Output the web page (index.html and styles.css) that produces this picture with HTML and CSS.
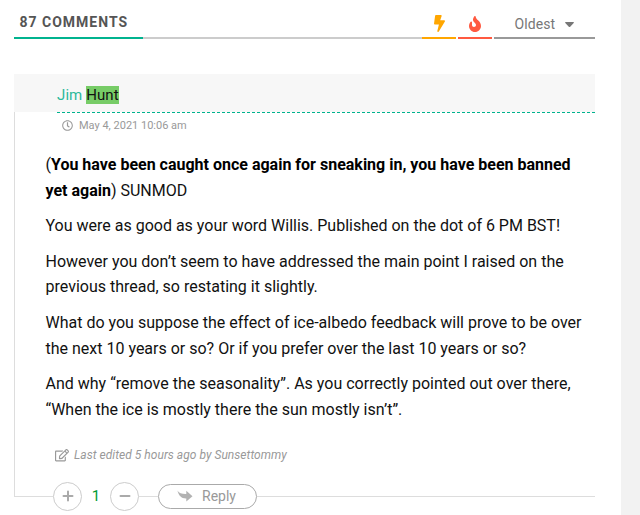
FILE: index.html
```html
<!DOCTYPE html>
<html lang="en">
<head>
  <meta charset="UTF-8" />
  <meta name="viewport" content="width=device-width, initial-scale=1.0"/>
  <title>Comments</title>
  <link rel="stylesheet" href="styles.css">
</head>
<body>
  <div class="page">
    <div class="thread-head">
      <div class="thread-count">87 COMMENTS</div>
      <div class="thread-line"></div>
      <div class="thread-filter bolt">
        <svg width="11" height="17" viewBox="0 0 320 512" preserveAspectRatio="none"><path d="M296 160H180.6l42.6-129.8C227.2 15 215.7 0 200 0H56C44 0 33.8 8.9 32.2 20.8l-32 240C-1.7 275.2 9.5 288 24 288h118.7L96.6 482.5c-3.6 15.2 8 29.5 23.3 29.5 8.4 0 16.4-4.4 20.8-12l176-304c9.3-15.9-2.2-36-20.7-36z"/></svg>
      </div>
      <div class="thread-filter fire">
        <svg width="12" height="16" viewBox="0 0 384 512"><path d="M216 23.86c0-23.8-30.65-32.77-44.15-13.04C48 191.85 224 200 224 288c0 35.63-29.11 64.46-64.85 63.99-35.17-.45-63.15-29.77-63.15-64.94v-85.51c0-21.7-26.47-32.23-41.43-16.5C27.8 213.16 0 261.33 0 320c0 105.87 86.13 192 192 192s192-86.13 192-192c0-170.29-168-193-168-296.14z"/></svg>
      </div>
      <div class="thread-sort">Oldest
        <svg width="9" height="5" viewBox="0 0 9 5"><path d="M.7 0h7.600q1 .2.4 1L5.200 4.700q-.7.600-1.400 0L.3 1q-.6-.8.400-1z"/></svg>
      </div>
    </div>

    <div class="comment">
      <div class="comment-head">
        <div class="comment-author">Jim <mark>Hunt</mark></div>
      </div>
      <div class="comment-body">
        <div class="comment-date">
          <svg width="11" height="11" viewBox="0 0 512 512"><path d="M256 8C119 8 8 119 8 256s111 248 248 248 248-111 248-248S393 8 256 8zm0 448c-110.500 0-200-89.500-200-200S145.500 56 256 56s200 89.500 200 200-89.500 200-200 200zm61.800-104.400l-84.900-61.700c-3.100-2.300-4.900-5.900-4.900-9.700V116c0-6.600 5.400-12 12-12h32c6.600 0 12 5.400 12 12v141.700l66.800 48.600c5.400 3.900 6.500 11.400 2.600 16.800L334.600 349c-3.900 5.300-11.400 6.500-16.800 2.600z"/></svg>
          <span>May 4, 2021 10:06 am</span>
        </div>
        <div class="comment-text">
          <p>(<strong>You have been caught once again for sneaking in, you have been banned<br>yet again</strong>) SUNMOD</p>
          <p>You were as good as your word Willis. Published on the dot of 6 PM BST!</p>
          <p>However you don’t seem to have addressed the main point I raised on the<br>previous thread, so restating it slightly.</p>
          <p>What do you suppose the effect of ice-albedo feedback will prove to be over<br>the next 10 years or so? Or if you prefer over the last 10 years or so?</p>
          <p>And why “remove the seasonality”. As you correctly pointed out over there,<br>“When the ice is mostly there the sun mostly isn’t”.</p>
        </div>
        <div class="comment-edited">
          <svg width="14" height="12.500" viewBox="0 0 576 512"><path d="M402.300 344.900l32-32c5-5 13.700-1.500 13.700 5.700V464c0 26.500-21.500 48-48 48H48c-26.500 0-48-21.500-48-48V112c0-26.500 21.500-48 48-48h273.500c7.100 0 10.700 8.600 5.700 13.700l-32 32c-1.500 1.500-3.500 2.300-5.700 2.300H48v352h352V350.500c0-2.100.8-4.100 2.300-5.600zm156.600-201.800L296.300 405.700l-90.400 10c-26.200 2.900-48.500-19.200-45.600-45.600l10-90.400L432.900 17.100c22.900-22.900 59.900-22.900 82.700 0l43.200 43.200c22.900 22.900 22.900 60 .1 82.800zM460.100 174L402 115.900 216.200 301.800l-7.300 65.300 65.300-7.300L460.100 174zm64.800-79.700l-43.200-43.200c-4.100-4.100-10.800-4.100-14.800 0L436 82l58.100 58.100 30.900-30.900c4-4.200 4-10.800-.1-14.900z"/></svg>
          <span>Last edited 5 hours ago by Sunsettommy</span>
        </div>
      </div>
      <div class="comment-foot">
        <span class="rule start"></span>
        <span class="vote"><svg width="12" height="12" viewBox="0 0 12 12"><path d="M6 1.500v9M1.500 6h9"/></svg></span>
        <span class="score">1</span>
        <span class="vote"><svg width="12" height="12" viewBox="0 0 12 12"><path d="M1.500 6h9"/></svg></span>
        <span class="rule mid"></span>
        <span class="reply">
          <svg width="16" height="12" viewBox="0 0 16 12"><path d="M.5.500C2 3.300 5 4 9.300 3.900V.8L15.500 6.200 9.300 11.600V8.500C4.500 8.700 1.500 5.500.5.500z"/></svg>
          Reply
        </span>
        <span class="rule end"></span>
      </div>
    </div>
  </div>
</body>
</html>
```

FILE: styles.css
```css
:root {
  --green: #00b38f;
  --gray: #999;
  --line: #ddd;
}

* {
  box-sizing: border-box;
}

body {
  margin: 0;
  height: 515px;
  overflow: hidden;
  background: #f2f2f2;
  font-family: Roboto, "Liberation Sans", sans-serif;
}

svg {
  display: block;
  fill: currentColor;
}

.page {
  width: 621px;
  height: 515px;
  padding: 7px 26px 0 14px;
  background: #fff;
}

/* Top bar */
.thread-head {
  display: flex;
  height: 32px;
}

.thread-head > div {
  border-bottom: 2px solid #ccc;
}

.thread-head .thread-count {
  width: 129px;
  padding-left: 5.5px;
  border-color: var(--green);
  color: #555;
  font-size: 14px;
  font-weight: 700;
  line-height: 31px;
  letter-spacing: 1px;
  white-space: nowrap;
}

.thread-line {
  flex: 1;
}

.thread-filter {
  display: flex;
  align-items: center;
  justify-content: center;
  width: 34px;
  margin-right: 2px;
  padding-top: 3px;
}

.thread-head .bolt {
  color: #ffa600;
  border-color: #ffa600;
}

.thread-head .fire {
  color: #ff5940;
  border-color: #ff5940;
}

.thread-head .thread-sort {
  display: flex;
  align-items: center;
  gap: 10px;
  width: 101px;
  padding: 3px 0 0 20.5px;
  border-color: var(--gray);
  color: #777;
  font-size: 14px;
  letter-spacing: 0.1px;
}

.thread-sort svg {
  margin-top: 2px;
}

/* Comment */
.comment {
  margin-top: 35px;
}

.comment-head {
  height: 38px;
  background: #f7f7f7;
}

.comment-author {
  height: 39px;
  margin-left: 43px;
  border-bottom: 1px dashed var(--green);
  color: #2bb99b;
  font-size: 15px;
  line-height: 42px;
  letter-spacing: 0.1px;
}

.comment-author mark {
  background: #77cc67;
  color: #111;
}

.comment-body {
  height: 385px;
  padding: 7px 0 0 30px;
  border-left: 1px solid var(--line);
}

.comment-date {
  display: flex;
  align-items: center;
  gap: 6px;
  height: 13px;
  margin-left: 17px;
  color: var(--gray);
  font-size: 11px;
}

.comment-text {
  margin: 20px 0 0 0.5px;
  color: #111;
  font-size: 16px;
  line-height: 25.6px;
  white-space: nowrap;
}

.comment-text p {
  margin: 0 0 10px;
}

.comment-text strong {
  color: #000;
}

.comment-edited {
  display: flex;
  align-items: center;
  gap: 5px;
  height: 14px;
  margin: 26px 0 0 10px;
  color: var(--gray);
  font-size: 12px;
  font-style: italic;
  letter-spacing: 0.03px;
}

.comment-foot {
  display: flex;
  align-items: center;
  height: 28px;
  margin-top: -15px;
}

.rule {
  height: 1px;
  background: var(--line);
}

.rule.start {
  width: 39px;
}

.rule.mid {
  width: 19px;
}

.rule.end {
  flex: 1;
}

.vote {
  display: flex;
  align-items: center;
  justify-content: center;
  width: 29px;
  height: 29px;
  border: 1px solid #ccc;
  border-radius: 50%;
}

.vote path {
  stroke: #aaa;
  stroke-width: 2;
  stroke-linecap: round;
}

.score {
  width: 28px;
  color: #009933;
  font-size: 15px;
  text-align: center;
}

.reply {
  display: flex;
  align-items: center;
  gap: 9px;
  width: 99px;
  height: 25px;
  padding-left: 18px;
  border: 1px solid #aaa;
  border-radius: 13px;
  color: var(--gray);
  font-size: 14px;
}

.reply svg {
  color: #b2b2b2;
}
```
